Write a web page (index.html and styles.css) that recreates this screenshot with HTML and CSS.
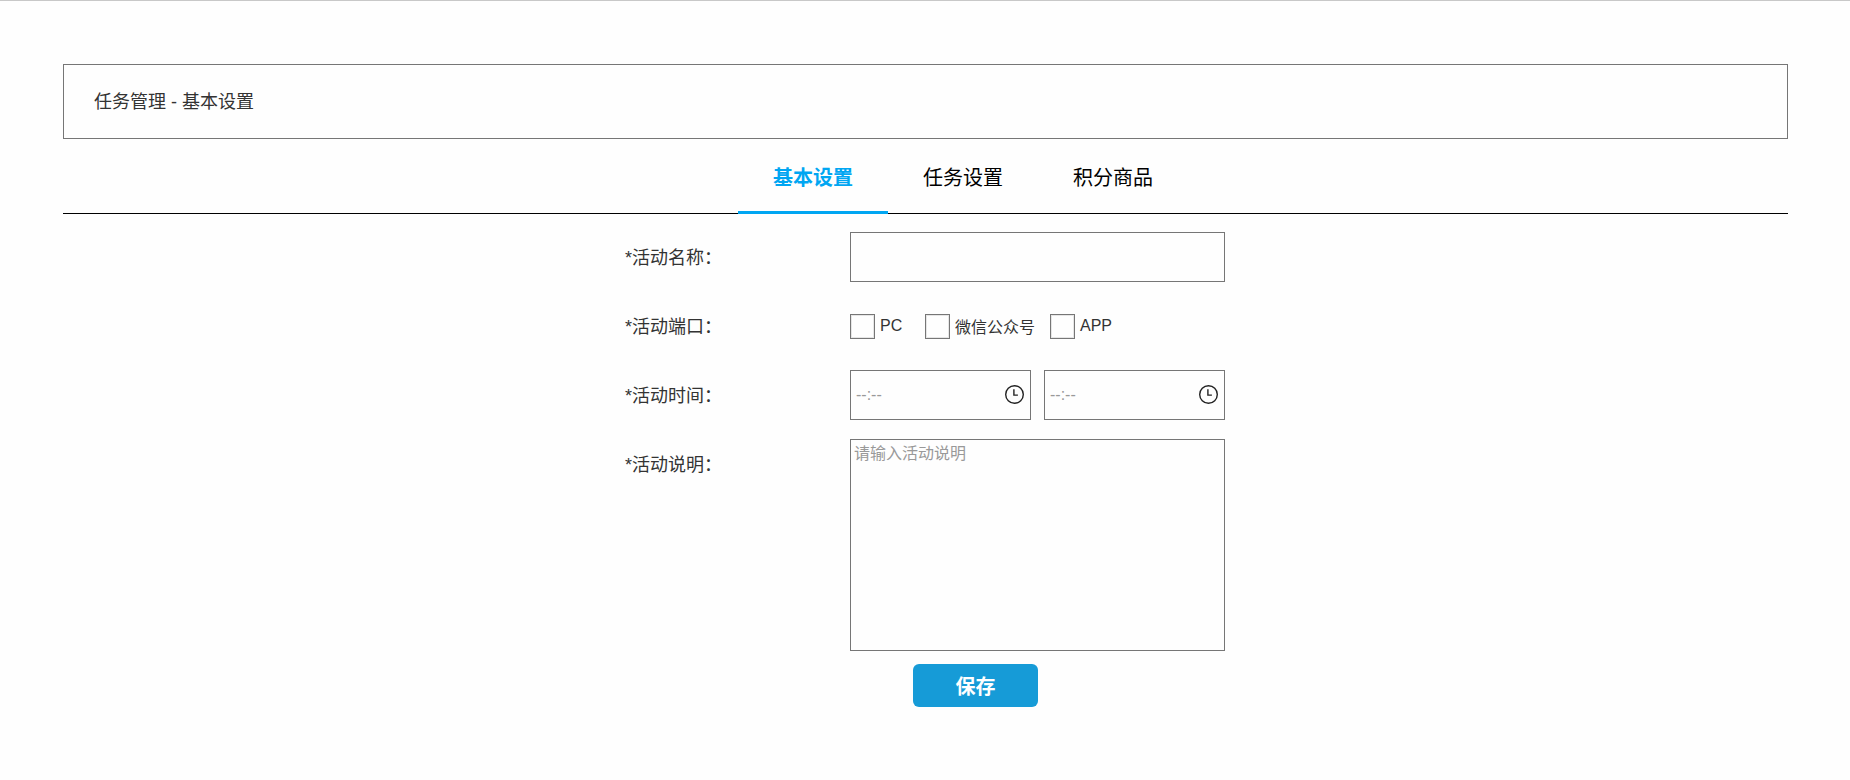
FILE: index.html
```html
<!DOCTYPE html>
<html lang="zh-CN">
<head>
<meta charset="utf-8">
<meta name="viewport" content="width=device-width, initial-scale=1">
<title>任务管理 - 基本设置</title>
<link rel="stylesheet" href="styles.css">
</head>
<body>
<main class="page">
  <h1 class="page-title">任务管理 - 基本设置</h1>
  <nav class="tabs">
    <a class="tab tab-active" href="#basic" aria-current="page">基本设置</a>
    <a class="tab" href="#tasks">任务设置</a>
    <a class="tab" href="#goods">积分商品</a>
  </nav>
  <form class="form" id="basic">
    <label class="form-label" for="name">*活动名称：</label>
    <input class="field" id="name" type="text">

    <span class="form-label" id="port-label">*活动端口：</span>
    <div class="ports" role="group" aria-labelledby="port-label">
      <label class="port"><input class="check" type="checkbox">PC</label>
      <label class="port"><input class="check" type="checkbox">微信公众号</label>
      <label class="port"><input class="check" type="checkbox">APP</label>
    </div>

    <label class="form-label" for="start">*活动时间：</label>
    <div class="times">
      <div class="time">
        <input class="field time-field" id="start" type="text" placeholder="--:--">
        <svg class="clock" viewBox="0 0 19 19" aria-hidden="true"><circle cx="9.5" cy="9.5" r="8.8"/><path d="M8.9 4.2v5.9h4"/></svg>
      </div>
      <div class="time">
        <input class="field time-field" type="text" placeholder="--:--" aria-label="结束时间">
        <svg class="clock" viewBox="0 0 19 19" aria-hidden="true"><circle cx="9.5" cy="9.5" r="8.8"/><path d="M8.9 4.2v5.9h4"/></svg>
      </div>
    </div>

    <label class="form-label" for="desc">*活动说明：</label>
    <textarea class="field desc" id="desc" placeholder="请输入活动说明"></textarea>

    <div class="actions"><button class="save" type="submit">保存</button></div>
  </form>
</main>
</body>
</html>
```
FILE: styles.css
```css
* {
  box-sizing: border-box;
}

body {
  margin: 0;
  border-top: 1px solid #c8c8c8;
  background: #fefefe;
  color: #333;
  font-family: "Liberation Sans", "Noto Sans CJK SC", sans-serif;
  font-size: 16px;
}

.page {
  padding: 63px 62px 60px 63px;
}

.page-title {
  margin: 0;
  padding: 25px 30px 23px;
  border: 1px solid #767676;
  font-size: 18px;
  font-weight: 400;
  line-height: 25px;
}

.tabs {
  display: flex;
  justify-content: center;
  height: 75px;
  padding-left: 75px;
  border-bottom: 1px solid #000;
}

.tab {
  width: 150px;
  height: 75px;
  color: #000;
  font-size: 20px;
  line-height: 78px;
  text-align: center;
  text-decoration: none;
}

.tab-active {
  border-bottom: 3px solid #00a6f2;
  color: #00a6f2;
  font-weight: 700;
}

.form {
  display: grid;
  grid-template-columns: 225px 375px;
  justify-content: center;
  row-gap: 19px;
  padding: 18px 1px 0 0;
}

.form-label {
  font-size: 18px;
  line-height: 52px;
  height: 50px;
}

.field {
  width: 100%;
  height: 50px;
  padding: 0 5px;
  border: 1px solid #767676;
  border-radius: 0;
  background: #fefefe;
  color: #333;
  font: inherit;
}

.field::placeholder {
  color: #999;
  opacity: 1;
}

.ports {
  display: grid;
  grid-template-columns: 75px 125px 1fr;
  align-items: center;
}

.port {
  display: flex;
  align-items: center;
  gap: 5px;
}

.check {
  appearance: none;
  width: 25px;
  height: 25px;
  margin: 0;
  border: 1px solid #767676;
  background: #fefefe;
  box-shadow: inset 0 0 0 1px #e6e6e6;
}

.check:checked {
  background: #169bd7;
}

.times {
  display: grid;
  grid-template-columns: 1fr 1fr;
  gap: 13px;
}

.time {
  position: relative;
}

.time-field {
  padding-right: 32px;
}

.clock {
  position: absolute;
  top: 15px;
  right: 7px;
  width: 19px;
  height: 19px;
  fill: none;
  stroke: #222;
  stroke-width: 1.4;
  pointer-events: none;
}

.desc {
  display: block;
  height: 212px;
  padding: 2px 3px;
  line-height: 24px;
  resize: none;
}

.actions {
  grid-column: 1 / -1;
  margin-top: -6px;
  padding-left: 288px;
}

.save {
  display: block;
  width: 125px;
  height: 43px;
  padding: 0;
  border: 0;
  border-radius: 6px;
  background: #169bd7;
  color: #fff;
  font: inherit;
  font-size: 20px;
  font-weight: 700;
}
```
